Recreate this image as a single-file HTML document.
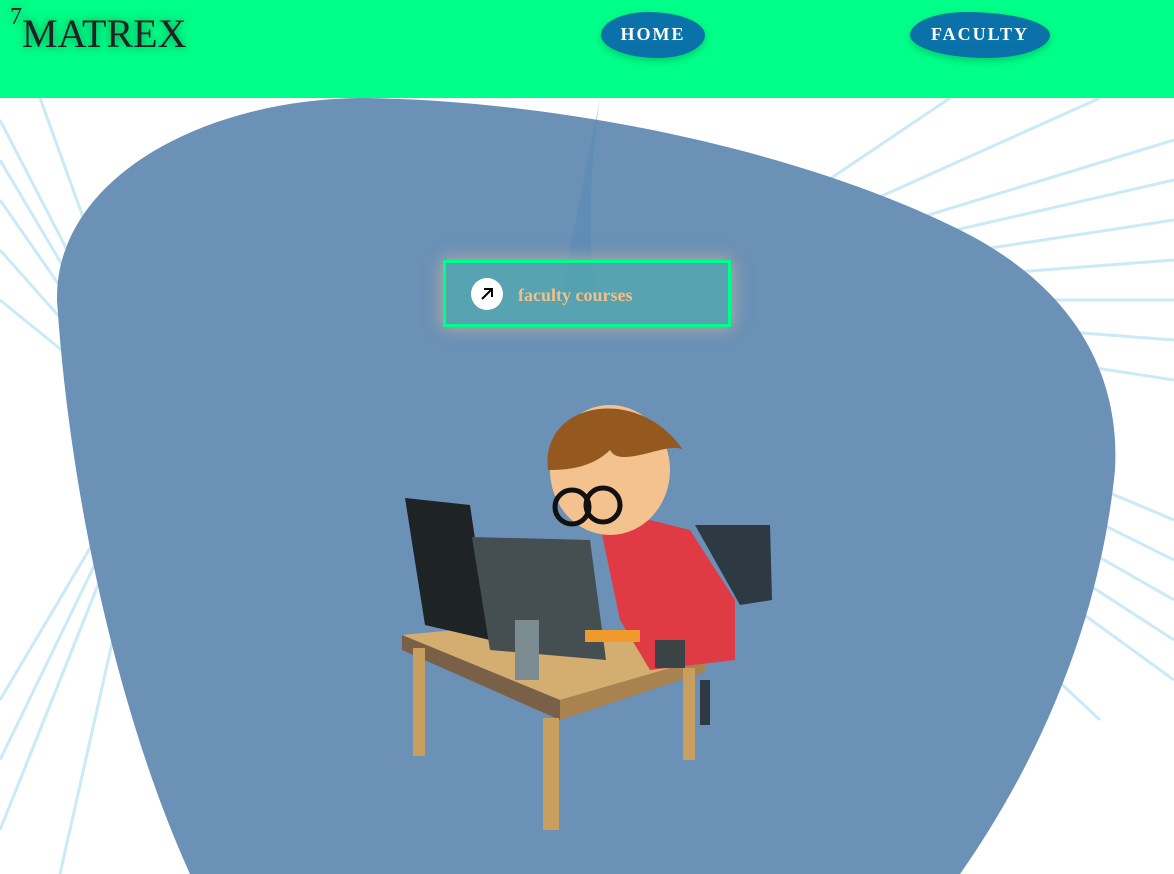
<!DOCTYPE html>
<html><head><meta charset="utf-8"><style>
html,body{margin:0;padding:0;width:1174px;height:874px;overflow:hidden;background:#fff;font-family:"Liberation Serif",serif}
header{position:absolute;left:0;top:0;width:1174px;height:98px;background:#00ff88}
.logo{position:absolute;left:10px;top:10px;font-size:40px;color:#222;text-shadow:0 0 10px rgba(0,0,0,.45)}
.logo sup{font-size:24px;position:relative;top:-6px;vertical-align:top}
.nav{position:absolute;background:#0a72a8;color:#fff;font-weight:bold;font-size:18px;letter-spacing:2px;text-decoration:underline;text-decoration-color:#1a5cff;text-align:center;line-height:44px;box-shadow:0 3px 8px rgba(0,0,0,.2)}
.home{left:601px;top:12px;width:104px;height:46px;border-radius:45% 55% 45% 55%/50% 50% 50% 50%}
.fac{left:910px;top:12px;width:140px;height:46px;border-radius:40% 60% 45% 55%/50% 50% 50% 50%}
.btn{position:absolute;left:443px;top:260px;width:282px;height:61px;border:3px solid #00ff88;background:rgba(80,170,175,.75);box-shadow:0 0 16px rgba(255,200,150,.6)}
.btn .c{position:absolute;left:25px;top:15px;width:32px;height:32px;border-radius:50%;background:#fff}
.btn span{position:absolute;left:72px;top:22px;color:#f3bf8a;font-weight:bold;font-size:18px}
</style></head><body>
<svg width="1174" height="874" style="position:absolute;left:0;top:0">
<g stroke="#b5e2f6" stroke-width="3" opacity=".7">
<line x1="160" y1="430" x2="0" y2="120"/><line x1="160" y1="430" x2="40" y2="98"/><line x1="160" y1="430" x2="0" y2="200"/><line x1="160" y1="430" x2="0" y2="300"/><line x1="160" y1="430" x2="0" y2="160"/><line x1="160" y1="430" x2="0" y2="250"/>
<line x1="160" y1="430" x2="0" y2="760"/><line x1="160" y1="430" x2="0" y2="830"/><line x1="160" y1="430" x2="60" y2="874"/><line x1="160" y1="430" x2="0" y2="700"/>
<line x1="650" y1="300" x2="1174" y2="140"/><line x1="650" y1="300" x2="1174" y2="180"/><line x1="650" y1="300" x2="1174" y2="220"/><line x1="650" y1="300" x2="1174" y2="260"/><line x1="650" y1="300" x2="1174" y2="300"/><line x1="650" y1="300" x2="1174" y2="340"/><line x1="650" y1="300" x2="1174" y2="380"/><line x1="650" y1="300" x2="1174" y2="520"/><line x1="650" y1="300" x2="1174" y2="560"/><line x1="650" y1="300" x2="1174" y2="600"/><line x1="650" y1="300" x2="1174" y2="640"/><line x1="650" y1="300" x2="1174" y2="680"/><line x1="650" y1="300" x2="1100" y2="98"/><line x1="650" y1="300" x2="950" y2="98"/><line x1="650" y1="300" x2="1100" y2="720"/>
</g>
<path d="M360 98 C560 100 800 150 960 230 C1080 290 1120 380 1115 470 C1100 620 1040 760 960 874 L190 874 C120 720 70 500 57 300 C55 180 200 100 360 98Z" fill="#6b91b6"/>
<path d="M600 98 C585 200 590 280 600 300 L560 300 Z" fill="#4a86b8" opacity=".35"/>
<!-- desk -->
<polygon points="402,635 560,700 705,658 560,620" fill="#d4ad70"/>
<polygon points="402,635 560,700 560,720 402,650" fill="#7a6046"/>
<polygon points="560,700 705,658 705,672 560,720" fill="#a8824f"/>
<rect x="413" y="648" width="12" height="108" fill="#c99f60"/><rect x="543" y="718" width="16" height="112" fill="#c99f60"/><rect x="683" y="668" width="12" height="92" fill="#c99f60"/>
<!-- chair -->
<path d="M695 525 L770 525 L772 600 L740 605 Z" fill="#2d3a44"/><rect x="700" y="680" width="10" height="45" fill="#2d3a44"/>
<!-- monitors -->
<polygon points="405,498 470,505 490,640 425,625" fill="#1e2326"/>
<polygon points="472,537 590,540 606,660 490,650" fill="#454f52"/>
<rect x="515" y="620" width="24" height="60" fill="#7b8b90"/>
<!-- boy -->
<path d="M600 525 L650 520 L690 530 L735 600 L735 660 L650 670 L620 620 Z" fill="#e03b45"/>
<ellipse cx="610" cy="470" rx="60" ry="65" fill="#f3c28f"/>
<path d="M548 470 C540 400 640 385 683 450 C670 440 620 470 610 450 C590 470 560 470 548 470Z" fill="#95581e"/>
<circle cx="572" cy="507" r="17" fill="none" stroke="#111" stroke-width="5"/><circle cx="603" cy="505" r="17" fill="none" stroke="#111" stroke-width="5"/>
<rect x="585" y="630" width="55" height="12" fill="#ef9a2a"/>
<rect x="655" y="640" width="30" height="28" fill="#3b4346"/>
</svg>
<header>
<div class="logo"><sup>7</sup>MATREX</div>
<div class="nav home">HOME</div>
<div class="nav fac">FACULTY</div>
</header>
<div class="btn"><div class="c"><svg width="32" height="32"><path d="M11 21 L21 11 M13 11 H21 V19" stroke="#000" stroke-width="2" fill="none"/></svg></div><span>faculty courses</span></div>
</body></html>
